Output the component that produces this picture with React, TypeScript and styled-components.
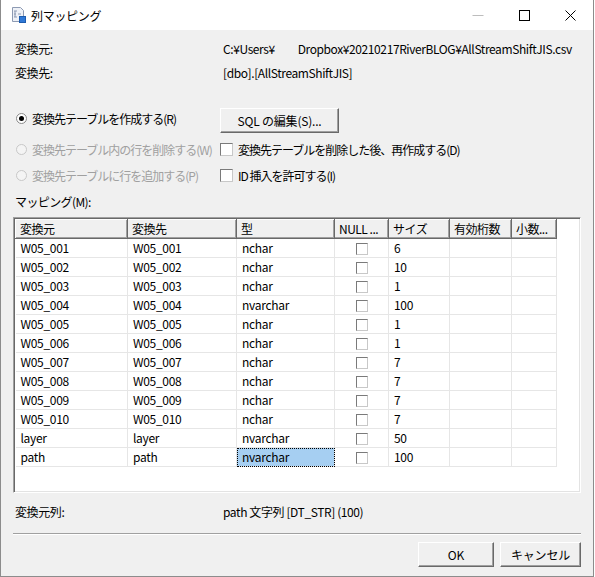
import React from 'react';
import styled, { createGlobalStyle } from 'styled-components';

const GlobalStyle = createGlobalStyle`
  html, body {
    margin: 0;
    padding: 0;
    background: #ffffff;
  }
  body {
    font-family: "Noto Sans CJK JP", "Liberation Sans", sans-serif;
    font-size: 12px;
    color: #000;
  }
`;

const Window = styled.div`
  width: 594px;
  height: 577px;
  box-sizing: border-box;
  border: 1px solid #8c8c8c;
  border-top: none;
  background: #f0f0f0;
  display: flex;
  flex-direction: column;
`;

const TitleBar = styled.div`
  height: 30px;
  flex: none;
  background: #ffffff;
  display: flex;
  align-items: center;
`;

const TitleIcon = styled.svg`
  width: 16px;
  height: 16px;
  margin-left: 9px;
  margin-right: 5px;
`;

const TitleText = styled.span`
  flex: 1;
  font-size: 12px;
  letter-spacing: -0.3px;
`;

const TitleButton = styled.div`
  width: 46px;
  height: 30px;
  display: flex;
  align-items: center;
  justify-content: center;
`;

const Content = styled.div`
  flex: 1;
  padding: 0 12px;
  display: flex;
  flex-direction: column;
`;

const InfoRow = styled.div<{ $top?: number }>`
  display: grid;
  grid-template-columns: 208px 1fr;
  height: 24px;
  align-items: center;
  padding-left: 2px;
  margin-top: ${({ $top }) => $top ?? 0}px;
  white-space: nowrap;
  letter-spacing: -0.4px;
`;

const OptionRow = styled.div<{ $top: number; $height: number }>`
  display: grid;
  grid-template-columns: 207px 1fr;
  height: ${({ $height }) => $height}px;
  margin-top: ${({ $top }) => $top}px;
  align-items: center;
  white-space: nowrap;
`;

const Choice = styled.label<{ $disabled?: boolean; $raise?: number }>`
  display: flex;
  align-items: center;
  gap: 5px;
  color: ${({ $disabled }) => ($disabled ? '#a0a0a0' : '#000')};
  letter-spacing: -1px;
  margin-bottom: ${({ $raise }) => ($raise ?? 0) * 2}px;
`;

const Radio = styled.span<{ $checked?: boolean; $disabled?: boolean }>`
  width: 11px;
  height: 11px;
  margin-left: 3px;
  box-sizing: border-box;
  border-radius: 50%;
  border: 1px solid ${({ $disabled }) => ($disabled ? '#c8c8c8' : '#8a8a8a')};
  background: ${({ $disabled }) => ($disabled ? '#f4f4f4' : '#ffffff')};
  display: flex;
  align-items: center;
  justify-content: center;
  &::after {
    content: '';
    width: 5px;
    height: 5px;
    border-radius: 50%;
    background: #000;
    display: ${({ $checked }) => ($checked ? 'block' : 'none')};
  }
`;

const Check = styled.span<{ $small?: boolean }>`
  width: ${({ $small }) => ($small ? 12 : 13)}px;
  height: ${({ $small }) => ($small ? 12 : 13)}px;
  box-sizing: border-box;
  border: 1px solid #7a7a7a;
  border-right-color: #c8c8c8;
  border-bottom-color: #c8c8c8;
  background: #fff;
  flex: none;
`;

const Button = styled.button<{ $width: number }>`
  width: ${({ $width }) => $width}px;
  height: 25px;
  box-sizing: border-box;
  font-family: "Noto Sans CJK JP", "Liberation Sans", sans-serif;
  font-size: 12px;
  color: #000;
  background: #f0f0f0;
  border: 1px solid;
  border-color: #ffffff #696969 #696969 #ffffff;
  box-shadow: inset -1px -1px 0 #a0a0a0;
  padding: 0;
  letter-spacing: -0.2px;
`;

const SectionLabel = styled.div`
  height: 22px;
  margin-top: 2px;
  padding-left: 2px;
  display: flex;
  align-items: center;
  letter-spacing: -0.6px;
`;

const GridBox = styled.div`
  margin-top: 5px;
  height: 276px;
  box-sizing: border-box;
  border: 1px solid;
  border-color: #a0a0a0 #ffffff #ffffff #a0a0a0;
  box-shadow: inset 1px 1px 0 #696969, inset -1px -1px 0 #e3e3e3;
  background: #ffffff;
  padding: 1px 0 0 1px;
  overflow: hidden;
`;

const Table = styled.table`
  border-collapse: collapse;
  table-layout: fixed;
  width: 541px;
`;

const HeadCell = styled.th`
  height: 19px;
  box-sizing: border-box;
  padding: 0 0 0 4px;
  text-align: left;
  font-weight: normal;
  background: #f0f0f0;
  border-top: 1px solid #ffffff;
  border-left: 1px solid #ffffff;
  box-shadow: inset -1px -1px 0 #a0a0a0;
  border-right: 1px solid #696969;
  border-bottom: 1px solid #696969;
  white-space: nowrap;
  overflow: hidden;
  letter-spacing: -0.5px;
  line-height: 16px;
`;

const Cell = styled.td<{ $selected?: boolean }>`
  height: 19px;
  box-sizing: border-box;
  padding: 0 0 0 5px;
  border-right: 1px solid #e6e6e6;
  border-bottom: 1px solid #e6e6e6;
  white-space: nowrap;
  overflow: hidden;
  letter-spacing: -0.3px;
  line-height: 16px;
  background: ${({ $selected }) => ($selected ? '#a6cff2' : 'transparent')};
  outline: ${({ $selected }) => ($selected ? '1px dotted #000' : 'none')};
  outline-offset: -1px;
  vertical-align: middle;
`;

const CheckWrap = styled.div`
  display: flex;
  justify-content: center;
  padding-right: 5px;
  padding-top: 1px;
`;

const Separator = styled.div`
  margin-top: 10px;
  height: 1px;
  background: #a0a0a0;
  box-shadow: 0 1px 0 #ffffff;
`;

const Footer = styled.div`
  margin-top: 8px;
  display: flex;
  justify-content: flex-end;
  gap: 6px;
`;

const columns = [
  { title: '変換元', width: 112 },
  { title: '変換先', width: 109 },
  { title: '型', width: 98 },
  { title: 'NULL ...', width: 54 },
  { title: 'サイズ', width: 61 },
  { title: '有効桁数', width: 62 },
  { title: '小数...', width: 45 },
];

interface MappingRow {
  source: string;
  dest: string;
  type: string;
  size: string;
}

const rows: MappingRow[] = [
  { source: 'W05_001', dest: 'W05_001', type: 'nchar', size: '6' },
  { source: 'W05_002', dest: 'W05_002', type: 'nchar', size: '10' },
  { source: 'W05_003', dest: 'W05_003', type: 'nchar', size: '1' },
  { source: 'W05_004', dest: 'W05_004', type: 'nvarchar', size: '100' },
  { source: 'W05_005', dest: 'W05_005', type: 'nchar', size: '1' },
  { source: 'W05_006', dest: 'W05_006', type: 'nchar', size: '1' },
  { source: 'W05_007', dest: 'W05_007', type: 'nchar', size: '7' },
  { source: 'W05_008', dest: 'W05_008', type: 'nchar', size: '7' },
  { source: 'W05_009', dest: 'W05_009', type: 'nchar', size: '7' },
  { source: 'W05_010', dest: 'W05_010', type: 'nchar', size: '7' },
  { source: 'layer', dest: 'layer', type: 'nvarchar', size: '50' },
  { source: 'path', dest: 'path', type: 'nvarchar', size: '100' },
];

const AppIcon = () => (
  <TitleIcon viewBox="0 0 16 16">
    <path d="M2.5 0.5h8l3 3v11h-11z" fill="#eef1f7" stroke="#8d9ab3" />
    <path d="M4 4h3M4 7h2M8 7h3M4 10h3M5 4v6" stroke="#8d9ab3" strokeWidth="1" fill="none" />
    <rect x="9.5" y="9.5" width="6" height="6" fill="#2f78d6" stroke="#1d5cae" />
  </TitleIcon>
);

export default function App() {
  const selectedRow = rows.length - 1;

  return (
    <>
      <GlobalStyle />
      <Window>
        <TitleBar>
          <AppIcon />
          <TitleText>列マッピング</TitleText>
          <TitleButton>
            <svg width="12" height="12" viewBox="0 0 12 12">
              <path d="M0.5 6.5h11" stroke="#bdbdbd" />
            </svg>
          </TitleButton>
          <TitleButton>
            <svg width="11" height="11" viewBox="0 0 11 11">
              <rect x="0.5" y="0.5" width="10" height="10" fill="none" stroke="#000" />
            </svg>
          </TitleButton>
          <TitleButton>
            <svg width="11" height="11" viewBox="0 0 11 11">
              <path d="M0.5 0.5l10 10M10.5 0.5l-10 10" stroke="#000" />
            </svg>
          </TitleButton>
        </TitleBar>

        <Content>
          <InfoRow $top={6}>
            <span>変換元:</span>
            <span>
              C:¥Users¥&nbsp;&nbsp;&nbsp;&nbsp;&nbsp;&nbsp;&nbsp;&nbsp;&nbsp;&nbsp;Dropbox¥20210217RiverBLOG¥AllStreamShiftJIS.csv
            </span>
          </InfoRow>
          <InfoRow>
            <span>変換先:</span>
            <span>[dbo].[AllStreamShiftJIS]</span>
          </InfoRow>

          <OptionRow $top={24} $height={25}>
            <Choice $raise={2}>
              <Radio $checked />
              変換先テーブルを作成する(R)
            </Choice>
            <div>
              <Button $width={119}>SQL の編集(S)...</Button>
            </div>
          </OptionRow>
          <OptionRow $top={5} $height={25}>
            <Choice $disabled $raise={1}>
              <Radio $disabled />
              変換先テーブル内の行を削除する(W)
            </Choice>
            <Choice $raise={1}>
              <Check />
              変換先テーブルを削除した後、再作成する(D)
            </Choice>
          </OptionRow>
          <OptionRow $top={0} $height={25}>
            <Choice $disabled>
              <Radio $disabled />
              変換先テーブルに行を追加する(P)
            </Choice>
            <Choice>
              <Check />
              ID&nbsp;挿入を許可する(I)
            </Choice>
          </OptionRow>

          <SectionLabel>マッピング(M):</SectionLabel>

          <GridBox>
            <Table>
              <colgroup>
                {columns.map((c) => (
                  <col key={c.title} style={{ width: c.width }} />
                ))}
              </colgroup>
              <thead>
                <tr>
                  {columns.map((c) => (
                    <HeadCell key={c.title}>{c.title}</HeadCell>
                  ))}
                </tr>
              </thead>
              <tbody>
                {rows.map((r, i) => (
                  <tr key={r.source}>
                    <Cell>{r.source}</Cell>
                    <Cell>{r.dest}</Cell>
                    <Cell $selected={i === selectedRow}>{r.type}</Cell>
                    <Cell>
                      <CheckWrap>
                        <Check $small />
                      </CheckWrap>
                    </Cell>
                    <Cell>{r.size}</Cell>
                    <Cell />
                    <Cell />
                  </tr>
                ))}
              </tbody>
            </Table>
          </GridBox>

          <InfoRow $top={6}>
            <span>変換元列:</span>
            <span>path 文字列 [DT_STR] (100)</span>
          </InfoRow>

          <Separator />

          <Footer>
            <Button $width={76}>OK</Button>
            <Button $width={81}>キャンセル</Button>
          </Footer>
        </Content>
      </Window>
    </>
  );
}
